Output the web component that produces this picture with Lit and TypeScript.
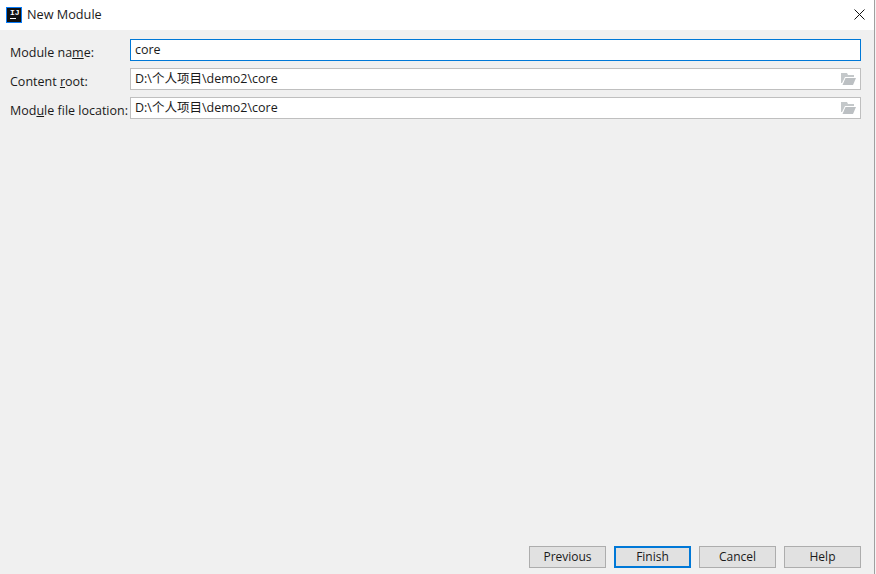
import { LitElement, css, html } from "lit"
import { customElement } from "lit/decorators.js"

const folderIcon = html`<svg class="folder" width="15" height="12" viewBox="0 0 15 12">
  <path d="M0 0h6l1 2h6v2H4L1 10H0z" fill="#c4c8ca"/>
  <path d="M4.5 5H15l-3 7H1.5z" fill="#bcc0c3"/>
</svg>`

@customElement("app-root")
export class AppRoot extends LitElement {
  static styles = css`
    :host {
      display: block;
      width: 876px;
      height: 574px;
      font-family: "Open Sans", "Liberation Sans", "Noto Sans CJK SC", sans-serif;
      font-size: 12.5px;
      color: #1a1a1a;
      background: #f4f4f4;
    }
    .window {
      display: flex;
      flex-direction: column;
      box-sizing: border-box;
      width: 875px;
      height: 574px;
      border-right: 1px solid #a0a0a0;
      background: #f0f0f0;
    }
    .title {
      display: flex;
      align-items: center;
      height: 30px;
      flex: none;
      padding: 0 9px 2px 6px;
      box-sizing: border-box;
      background: #fff;
      font-size: 12.7px;
    }
    .logo {
      display: flex;
      flex-direction: column;
      box-sizing: border-box;
      width: 16px;
      height: 16px;
      margin: 2px 5px 0 0;
      padding: 1px 0 0 3px;
      border: 1px solid #087cfa;
      background: #111;
      color: #fff;
      font: bold 8px/8px "Liberation Mono", monospace;
    }
    .logo i {
      display: block;
      width: 6px;
      height: 1px;
      margin-top: 1px;
      background: #fff;
    }
    .name { flex: 1; }
    .form {
      display: grid;
      grid-template-columns: 120px 731px;
      row-gap: 7px;
      align-items: center;
      align-content: start;
      flex: 1;
      padding: 9px 0 0 10px;
    }
    label {
      white-space: nowrap;
      padding-top: 5px;
    }
    u { text-underline-offset: 1px; }
    .field {
      display: flex;
      align-items: center;
      justify-content: space-between;
      box-sizing: border-box;
      height: 22px;
      padding: 0 4px 2px;
      border: 1px solid #bfbfbf;
      background: #fff;
    }
    .field.focus { border-color: #0078d7; }
    .path { padding-bottom: 4px; }
    .folder { margin: 4px 0 0 0; }
    .buttons {
      display: flex;
      justify-content: flex-end;
      gap: 8px;
      padding: 0 13px 6px 0;
    }
    button {
      box-sizing: border-box;
      width: 77px;
      height: 22px;
      padding: 0 0 2px;
      border: 1px solid #adadad;
      background: #e1e1e1;
      color: #1a1a1a;
      font-family: "Open Sans", "Liberation Sans", sans-serif;
      font-size: 12px;
    }
    button.primary { border: 2px solid #0078d7; }
  `

  render () {
    return html`
      <div class="window">
        <div class="title">
          <span class="logo">IJ<i></i></span>
          <span class="name">New Module</span>
          <svg width="11" height="11" viewBox="0 0 11 11"><path d="M.5.5l10 10M10.5.5l-10 10" stroke="#111" fill="none"/></svg>
        </div>
        <div class="form">
          <label>Module na<u>m</u>e:</label>
          <div class="field focus">core</div>
          <label>Content <u>r</u>oot:</label>
          <div class="field path">D:\\个人项目\\demo2\\core ${folderIcon}</div>
          <label>Mod<u>u</u>le file location:</label>
          <div class="field path">D:\\个人项目\\demo2\\core ${folderIcon}</div>
        </div>
        <div class="buttons">
          <button>Previous</button>
          <button class="primary">Finish</button>
          <button>Cancel</button>
          <button>Help</button>
        </div>
      </div>
    `
  }
}
